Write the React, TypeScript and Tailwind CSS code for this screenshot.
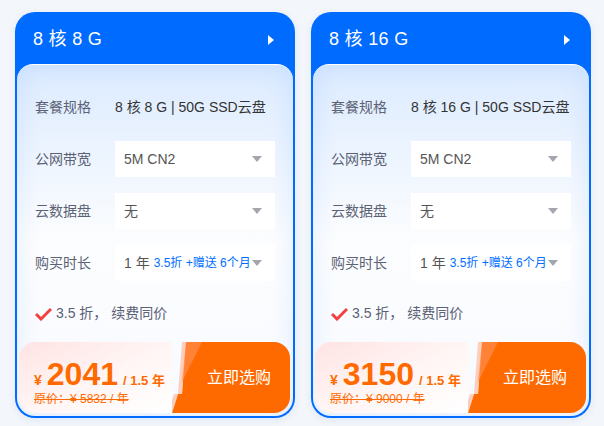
interface Plan {
  title: string;
  spec: string;
  price: string;
  original: string;
}

const plans: Plan[] = [
  { title: '8 核 8 G', spec: '8 核 8 G | 50G SSD云盘', price: '2041', original: '5832' },
  { title: '8 核 16 G', spec: '8 核 16 G | 50G SSD云盘', price: '3150', original: '9000' },
];

const font = { fontFamily: '"Liberation Sans", "Noto Sans CJK SC", sans-serif' };

function Caret() {
  return (
    <svg width="10" height="6" viewBox="0 0 10 6" className="shrink-0">
      <path d="M0 0h10L5 6z" fill="#a3a7ad" />
    </svg>
  );
}

function SelectBox({ children }: { children: React.ReactNode }) {
  return (
    <div className="flex h-[36px] w-[160px] items-center justify-between bg-white pl-[9px] pr-[13px] text-[14px] text-[#555]">
      <div className="flex items-center whitespace-nowrap">{children}</div>
      <Caret />
    </div>
  );
}

function Row({ label, children }: { label: string; children: React.ReactNode }) {
  return (
    <div className="flex h-[36px] items-center">
      <div className="w-[80px] text-[14px] text-[#5b6275]">{label}</div>
      {children}
    </div>
  );
}

function PlanCard({ plan }: { plan: Plan }) {
  return (
    <div className="flex h-[406px] w-[280px] flex-col rounded-[20px] bg-[#006bff] shadow-[0_2px_8px_rgba(0,80,200,0.08)]">
      <div className="flex h-[52px] items-center justify-between pl-[18px] pr-[21px] pt-[3px]">
        <span className="text-[18px] tracking-[0.3px] text-white">{plan.title}</span>
        <svg width="6" height="10" viewBox="0 0 6 10">
          <path d="M0 0l6 5-6 5z" fill="#fff" />
        </svg>
      </div>
      <div className="mx-[2px] mb-[2px] flex flex-1 flex-col rounded-t-[16px] rounded-b-[18px] border-t border-white bg-gradient-to-b from-[#dcebff] via-[#fcfdfe] to-[#f7faff] px-[18px] pt-[24px] shadow-[inset_0_0_26px_rgba(0,110,255,0.11)]">
        <div className="flex flex-col gap-[16px]">
          <Row label="套餐规格">
            <span className="whitespace-nowrap text-[14px] text-[#333]">{plan.spec}</span>
          </Row>
          <Row label="公网带宽">
            <SelectBox>5M CN2</SelectBox>
          </Row>
          <Row label="云数据盘">
            <SelectBox>无</SelectBox>
          </Row>
          <Row label="购买时长">
            <SelectBox>
              <span>1 年</span>
              <span className="ml-[4px] text-[12px] text-[#006eff]">3.5折 +赠送 6个月</span>
            </SelectBox>
          </Row>
        </div>
        <div className="mt-[22px] flex items-center gap-[4px] text-[14px] text-[#5b6275]">
          <svg width="17" height="14" viewBox="0 0 17 14">
            <path d="M1 7l5 5L16 2" stroke="#f0433f" strokeWidth="3" fill="none" />
          </svg>
          <span>3.5 折， 续费同价</span>
        </div>
      </div>
    </div>
  );
}

function PriceBar({ plan }: { plan: Plan }) {
  return (
    <div className="absolute bottom-[5px] left-[4px] right-[5px] flex h-[71px] overflow-hidden rounded-[16px]">
      <div className="flex flex-1 flex-col justify-center bg-gradient-to-br from-[#ffe3e3] via-[#fff5f4] to-white pl-[15px] pt-[9px] text-[#ff6a00]">
        <div className="flex items-baseline font-bold">
          <span className="mr-[5px] text-[14px]">¥</span>
          <span className="text-[32px] leading-[32px]">{plan.price}</span>
          <span className="ml-[5px] text-[13px]">/ 1.5 年</span>
        </div>
        <div className="mt-[1px] text-[12px] leading-[15px] line-through decoration-[#ff6a00]">
          原价：¥ {plan.original} / 年
        </div>
      </div>
      <div className="relative flex w-[118px] items-center justify-end pr-[19px] text-[16px] text-white">
        <svg className="absolute inset-0" width="118" height="71" viewBox="0 0 118 71">
          <path d="M0 71L6 52H10L14 0H118V71Z" fill="#ff6a00" />
          <path d="M-4 71L2 52H6L10 0H14L10 52H6L0 71Z" fill="#ffb090" opacity="0.6" />
          <path d="M14 0H30L10 40Z" fill="#ff8d4d" opacity="0.7" />
        </svg>
        <span className="relative">立即选购</span>
      </div>
    </div>
  );
}

export default function App() {
  return (
    <div className="min-h-[426px] w-[604px] bg-[#f3f6fa] pl-[15px] pt-[12px]" style={font}>
      <div className="flex gap-[16px]">
        {plans.map((p) => (
          <div key={p.title} className="relative">
            <PlanCard plan={p} />
            <PriceBar plan={p} />
          </div>
        ))}
      </div>
    </div>
  );
}
